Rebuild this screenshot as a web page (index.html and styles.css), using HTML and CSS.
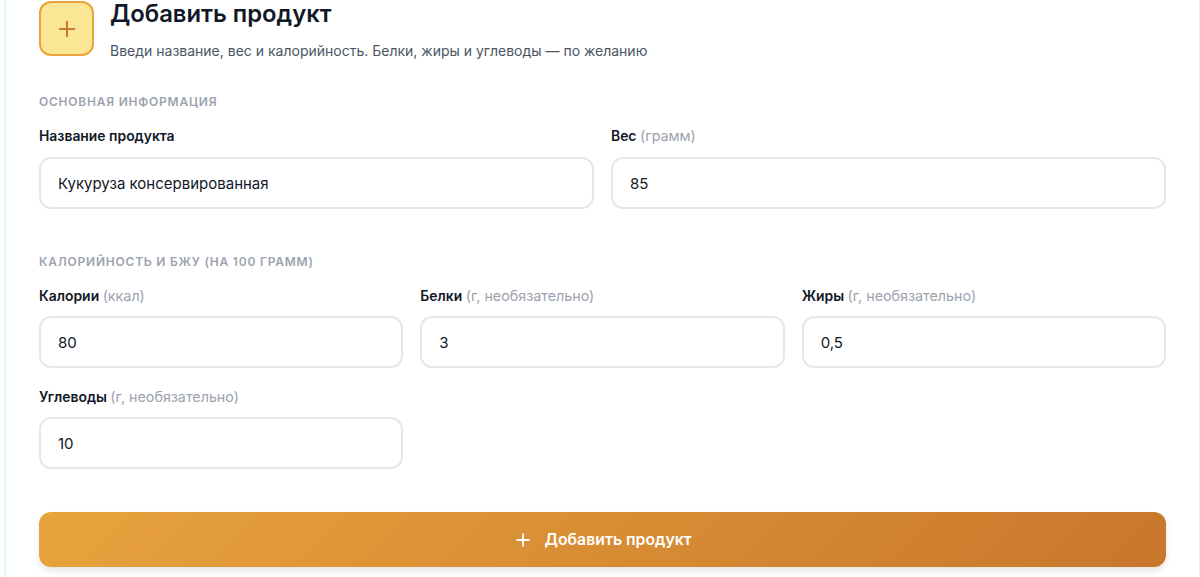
FILE: index.html
```html
<!DOCTYPE html>
<html>
<head>
  <meta charset="UTF-8">
  <title>Добавить продукт</title>
  <link rel="stylesheet" href="styles.css">
</head>
<body>
  <div class="card">
    <div class="header">
      <div class="header-icon">
        <svg width="20" height="20" viewBox="0 0 20 20" fill="none" stroke="#c97a2e" stroke-width="2">
          <path d="M10 2v16M2 10h16"/>
        </svg>
      </div>
      <div class="header-text">
        <h1>Добавить продукт</h1>
        <p>Введи название, вес и калорийность. Белки, жиры и углеводы — по желанию</p>
      </div>
    </div>

    <form class="product-form">
      <div class="section-title">Основная информация</div>
      <div class="row row-2">
        <div class="field">
          <label>Название продукта</label>
          <input type="text" value="Кукуруза консервированная">
        </div>
        <div class="field">
          <label>Вес <span>(грамм)</span></label>
          <input type="text" value="85">
        </div>
      </div>

      <div class="section-title second">Калорийность и БЖУ (на 100 грамм)</div>
      <div class="row row-3">
        <div class="field">
          <label>Калории <span>(ккал)</span></label>
          <input type="text" value="80">
        </div>
        <div class="field">
          <label>Белки <span>(г, необязательно)</span></label>
          <input type="text" value="3">
        </div>
        <div class="field">
          <label>Жиры <span>(г, необязательно)</span></label>
          <input type="text" value="0,5">
        </div>
        <div class="field">
          <label>Углеводы <span>(г, необязательно)</span></label>
          <input type="text" value="10">
        </div>
      </div>

      <button type="button" class="submit-btn">
        <svg width="16" height="16" viewBox="0 0 16 16" fill="none" stroke="#fff" stroke-width="1.8">
          <path d="M8 1.5v13M1.5 8h13"/>
        </svg>
        Добавить продукт
      </button>
    </form>
  </div>
</body>
</html>
```

FILE: styles.css
```css
html, body {
  height: 100%;
  margin: 0;
  overflow: hidden;
  background: #fff;
}
body {
  font-family: Inter, "Noto Sans", sans-serif;
  color: #111827;
}
.card {
  box-sizing: border-box;
  height: 100%;
  margin-left: 4px;
  padding: 1px 33px 0 33px;
  background: #fff;
  border-left: 2px solid #dff8ea;
  border-right: 1px solid #dff5ee;
}
.header {
  display: flex;
  gap: 16px;
}
.header-icon {
  box-sizing: border-box;
  width: 55px;
  height: 55px;
  flex-shrink: 0;
  display: flex;
  align-items: center;
  justify-content: center;
  background: #fae695;
  border: 2px solid #e8a33d;
  border-radius: 12px;
}
.header-text h1 {
  margin: 0;
  font-size: 23.8px;
  line-height: 26px;
  font-weight: 600;
}
.header-text p {
  margin: 15px 0 0;
  font-size: 14px;
  line-height: 17px;
  color: #4b5563;
}
.product-form {
  margin-top: 36px;
}
.section-title {
  font-size: 12px;
  line-height: 14px;
  font-weight: 600;
  letter-spacing: 0.78px;
  text-transform: uppercase;
  color: #9ca3af;
  margin-bottom: 19px;
}
.section-title.second {
  margin-top: 46px;
}
.row {
  display: grid;
  column-gap: 17px;
  row-gap: 21px;
}
.row-2 {
  grid-template-columns: 1fr 1fr;
}
.row-3 {
  grid-template-columns: 1fr 1fr 1fr;
}
.field label {
  display: block;
  height: 17px;
  font-size: 13.9px;
  line-height: 17px;
  font-weight: 600;
  margin-bottom: 12px;
}
.row-3 .field label {
  margin-bottom: 11px;
}
.field label span {
  font-size: 14.3px;
  line-height: 1;
  font-weight: 400;
  color: #9ca3af;
}
.field input {
  box-sizing: border-box;
  display: block;
  width: 100%;
  height: 52px;
  padding: 0 17px;
  font-family: inherit;
  font-size: 15px;
  color: #111827;
  background: #fff;
  border: 2px solid #e5e7eb;
  border-radius: 12px;
}
.submit-btn {
  display: flex;
  align-items: center;
  justify-content: center;
  gap: 13px;
  width: 100%;
  height: 55px;
  margin-top: 43px;
  padding: 0 0 0 2px;
  font-family: inherit;
  font-size: 15.8px;
  font-weight: 600;
  color: #fff;
  background: linear-gradient(135deg, #e8a33d, #c8772b);
  border: none;
  border-radius: 12px;
  box-shadow: 0 4px 6px rgba(0, 0, 0, 0.1);
  cursor: pointer;
}
```
